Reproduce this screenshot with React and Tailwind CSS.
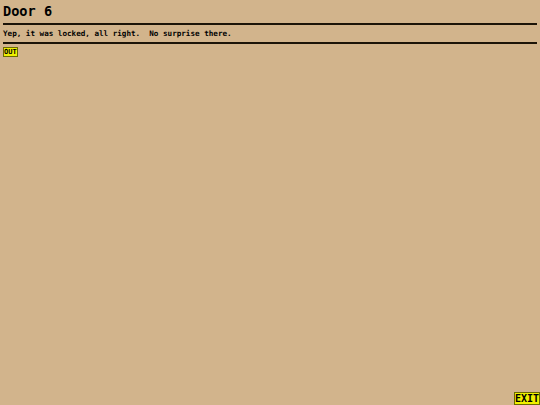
import React from 'react';

const App = () => {
  return (
    <div
      className="relative h-[405px] w-full overflow-hidden bg-[#d2b48c] px-[3px] text-black"
      style={{ fontFamily: '"DejaVu Sans Mono", "Liberation Mono", monospace' }}
    >
      <h1 className="mt-[3px] mb-[4px] text-[13.6px] font-bold leading-[16px]">Door 6</h1>
      <hr className="border-0 border-t-2 border-[#1c1408]" />
      <p className="whitespace-pre py-[4px] text-[7.6px] font-bold leading-[9px]">
        Yep, it was locked, all right.  No surprise there.
      </p>
      <hr className="border-0 border-t-2 border-[#1c1408]" />

      <div className="mt-[3px]">
        <button className="flex h-[10px] items-center border border-[#6b6b00] bg-[#f0f000] px-0 text-[7px] font-bold leading-none">
          OUT
        </button>
      </div>

      {/* bottom-right exit */}
      <button className="absolute bottom-0 right-0 flex h-[13px] items-center border border-[#6b6b00] bg-[#f0f000] px-0 text-[10px] font-bold leading-none">
        EXIT
      </button>
    </div>
  );
};

export default App;
